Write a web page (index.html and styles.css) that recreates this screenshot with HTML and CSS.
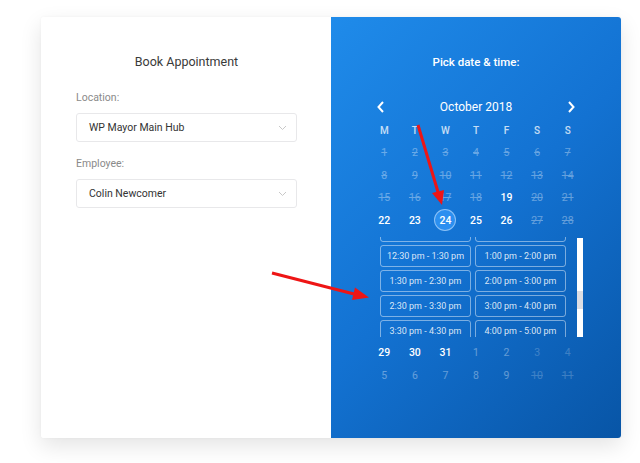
FILE: index.html
```html
<!DOCTYPE html>
<html>
<head>
	<meta charset="UTF-8">
	<title>Book Appointment</title>
	<link rel="stylesheet" href="styles.css">
</head>
<body>
	<div class="page">
		<div class="card">
			<div class="left">
				<h2 class="title">Book Appointment</h2>
				<label class="label">Location:</label>
				<div class="select">
					<span>WP Mayor Main Hub</span>
					<svg class="chev" width="9" height="6" viewBox="0 0 9 6"><path d="M1 1l3.5 3.5L8 1" fill="none" stroke="#c8c8c8" stroke-width="1"/></svg>
				</div>
				<label class="label">Employee:</label>
				<div class="select">
					<span>Colin Newcomer</span>
					<svg class="chev" width="9" height="6" viewBox="0 0 9 6"><path d="M1 1l3.5 3.5L8 1" fill="none" stroke="#c8c8c8" stroke-width="1"/></svg>
				</div>
			</div>
			<div class="right">
				<h2 class="pick">Pick date &amp; time:</h2>
				<div class="nav">
					<svg width="8" height="12" viewBox="0 0 8 12"><path d="M6 1L1.5 6 6 11" fill="none" stroke="#fff" stroke-width="2"/></svg>
					<span class="month">October 2018</span>
					<svg width="8" height="12" viewBox="0 0 8 12"><path d="M2 1l4.5 5L2 11" fill="none" stroke="#fff" stroke-width="2"/></svg>
				</div>
				<div class="grid">
					<span class="wd">M</span><span class="wd">T</span><span class="wd">W</span><span class="wd">T</span><span class="wd">F</span><span class="wd">S</span><span class="wd">S</span>
					<span class="d off">1</span><span class="d off">2</span><span class="d off">3</span><span class="d off">4</span><span class="d off">5</span><span class="d off">6</span><span class="d off">7</span>
					<span class="d off">8</span><span class="d off">9</span><span class="d off">10</span><span class="d off">11</span><span class="d off">12</span><span class="d off">13</span><span class="d off">14</span>
					<span class="d off">15</span><span class="d off">16</span><span class="d off">17</span><span class="d off">18</span><span class="d on">19</span><span class="d off">20</span><span class="d off">21</span>
					<span class="d on">22</span><span class="d on">23</span><span class="d on"><b class="sel">24</b></span><span class="d on">25</span><span class="d on">26</span><span class="d off">27</span><span class="d off">28</span>
				</div>
				<div class="slots">
					<div class="slot-list">
						<div class="slot-grid">
							<span class="slot"></span><span class="slot"></span>
							<span class="slot">12:30 pm - 1:30 pm</span><span class="slot">1:00 pm - 2:00 pm</span>
							<span class="slot">1:30 pm - 2:30 pm</span><span class="slot">2:00 pm - 3:00 pm</span>
							<span class="slot">2:30 pm - 3:30 pm</span><span class="slot">3:00 pm - 4:00 pm</span>
							<span class="slot">3:30 pm - 4:30 pm</span><span class="slot">4:00 pm - 5:00 pm</span>
						</div>
					</div>
					<div class="scrollbar"><div class="thumb"></div></div>
				</div>
				<div class="grid">
					<span class="d on">29</span><span class="d on">30</span><span class="d on">31</span><span class="d next">1</span><span class="d next">2</span><span class="d faint">3</span><span class="d faint">4</span>
					<span class="d next">5</span><span class="d next">6</span><span class="d next">7</span><span class="d next">8</span><span class="d next">9</span><span class="d faint strike">10</span><span class="d faint strike">11</span>
				</div>
			</div>
		</div>
	</div>
	<!-- annotation arrows on top of the screenshot -->
	<svg class="marks" width="640" height="463" viewBox="0 0 640 463">
		<line x1="418" y1="125" x2="438" y2="192" stroke="#ee1515" stroke-width="3"/>
		<polygon points="442,205 444,190 432,193" fill="#ee1515"/>
		<line x1="272" y1="273" x2="354" y2="294" stroke="#ee1515" stroke-width="3"/>
		<polygon points="369,297.5 352,300 355,287.5" fill="#ee1515"/>
	</svg>
</body>
</html>
```

FILE: styles.css
```css
* {
	box-sizing: border-box;
}
body {
	margin: 0;
	padding: 0;
	background: #fff;
	font-family: Roboto, 'Liberation Sans', sans-serif;
	position: relative;
	width: 640px;
	height: 463px;
	overflow: hidden;
}
.page {
	padding: 17px 0 0 41px;
}
.card {
	display: flex;
	width: 580px;
	height: 421px;
	border-radius: 3px;
	overflow: hidden;
	box-shadow: 0 8px 22px rgba(0, 0, 0, .11), 0 0 3px rgba(0, 0, 0, .04);
}
.left {
	width: 290px;
	background: #fff;
	padding: 37px 34px 0 35px;
	display: flex;
	flex-direction: column;
}
.title {
	margin: 0 0 21px;
	font-size: 12.5px;
	line-height: 16px;
	font-weight: 400;
	color: #3a3a3a;
	text-align: center;
}
.label {
	font-size: 10.5px;
	line-height: 14px;
	color: #8a8a8a;
	margin-bottom: 8px;
}
.select {
	height: 29px;
	border: 1px solid #e8e8ea;
	border-radius: 3px;
	display: flex;
	align-items: center;
	justify-content: space-between;
	padding: 0 9px 0 12px;
	font-size: 10.5px;
	color: #333;
	margin-bottom: 15px;
}
.right {
	width: 290px;
	background: linear-gradient(135deg, #1f8bea 0%, #1372d2 50%, #0855a6 100%);
	padding: 37px 38px 0 38px;
	color: #fff;
}
.pick {
	margin: 0 0 28px;
	font-size: 11.5px;
	line-height: 16px;
	font-weight: 500;
	text-align: center;
}
.nav {
	display: flex;
	align-items: center;
	justify-content: space-between;
	height: 18px;
	padding: 0 8px 0 8px;
	margin-bottom: 3px;
}
.month {
	font-size: 12px;
}
.grid {
	display: grid;
	grid-template-columns: repeat(7, 1fr);
	grid-auto-rows: 22.5px;
	width: 214px;
}
.grid span {
	display: flex;
	align-items: center;
	justify-content: center;
	font-size: 10.5px;
}
.wd {
	font-weight: 500;
	opacity: .75;
	font-size: 10px !important;
}
.d.off {
	opacity: .35;
	text-decoration: line-through;
}
.d.on {
	font-weight: 500;
}
.d.next {
	opacity: .35;
}
.d.faint {
	opacity: .2;
}
.d.strike {
	text-decoration: line-through;
}
.sel {
	display: flex;
	align-items: center;
	justify-content: center;
	width: 22px;
	height: 22px;
	border-radius: 50%;
	background: #2b8ff0;
	border: 1px solid rgba(255, 255, 255, .45);
	font-weight: 500;
}
.slots {
	display: flex;
	gap: 11px;
	width: 214px;
	height: 100px;
	padding-left: 11px;
	margin: 5px 0 5px;
}
.slot-list {
	width: 186px;
	height: 100px;
	overflow: hidden;
}
.slot-grid {
	display: grid;
	grid-template-columns: 91px 91px;
	grid-auto-rows: 22px;
	gap: 3px 4px;
	margin-top: -16.5px;
}
.slot {
	display: flex;
	align-items: center;
	justify-content: center;
	border: 1px solid rgba(255, 255, 255, .45);
	border-radius: 3px;
	font-size: 9px;
	color: rgba(255, 255, 255, .85);
}
.scrollbar {
	width: 6px;
	height: 99px;
	margin-top: 1px;
	background: #fff;
}
.thumb {
	margin-top: 53px;
	height: 18px;
	background: #dddee4;
}
.marks {
	position: absolute;
	top: 0;
	left: 0;
	pointer-events: none;
}
```
